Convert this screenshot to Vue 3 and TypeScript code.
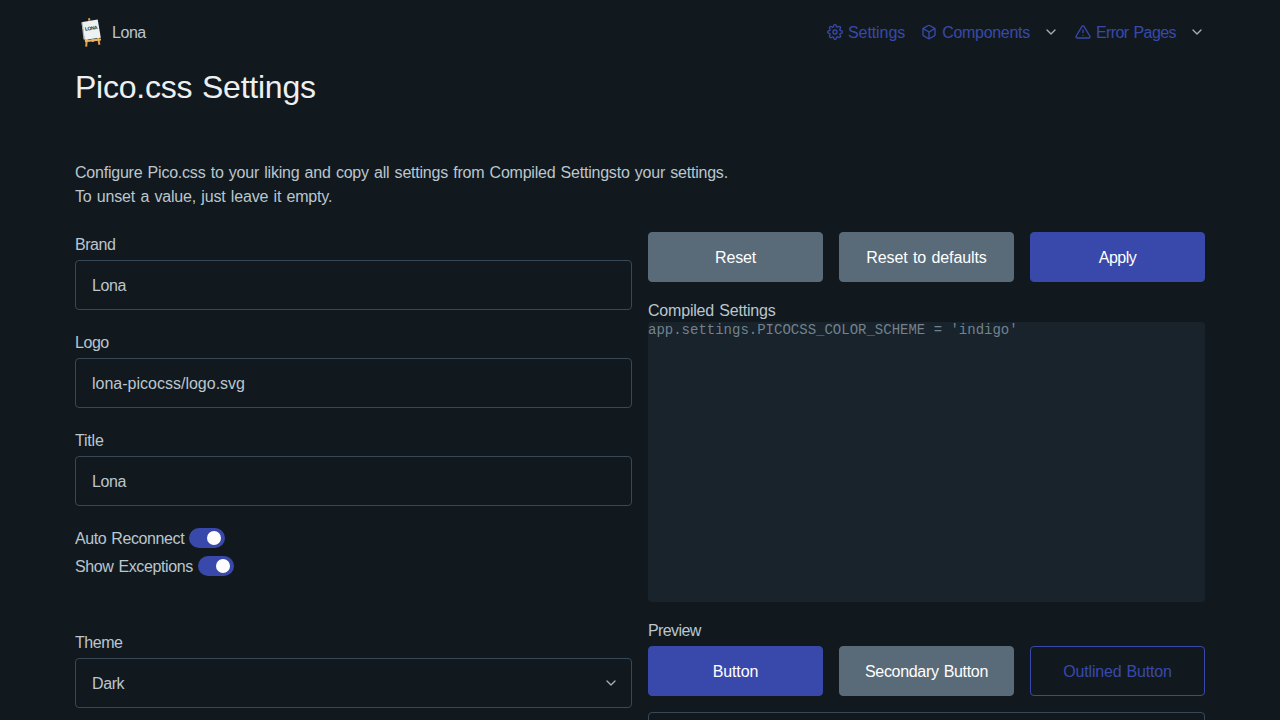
<script setup lang="ts">
import { ref } from 'vue'

interface TextField {
  id: string
  label: string
  value: string
}

interface Toggle {
  id: string
  label: string
  on: boolean
}

const fields = ref<TextField[]>([
  { id: 'brand', label: 'Brand', value: 'Lona' },
  { id: 'logo', label: 'Logo', value: 'lona-picocss/logo.svg' },
  { id: 'title', label: 'Title', value: 'Lona' },
])

const toggles = ref<Toggle[]>([
  { id: 'reconnect', label: 'Auto Reconnect', on: true },
  { id: 'exceptions', label: 'Show Exceptions', on: true },
])

const compiled = ref("app.settings.PICOCSS_COLOR_SCHEME = 'indigo'")
</script>

<template>
  <div class="page">
    <nav class="nav">
      <a class="brand">
        <svg class="logo" viewBox="0 0 22 30" width="22" height="30">
          <path d="M2.4 5.4 L3.4 12 M6.8 22 L6.2 29.6 M18 20 L19.4 27.8 M12.8 22 V25" stroke="#e0a550" stroke-width="2" fill="none" />
          <path d="M4.8 23 L21 21.4 V23.4 L5 25.2Z" fill="#edb45f" />
          <path d="M1.6 5.6 L3 4.8 L4.8 22.8 L3.4 22.2Z" fill="#a9b0b3" />
          <path d="M2.6 5 L17.7 2.4 L20.8 20.8 L4.6 22.8Z" fill="#eef1f2" />
          <path d="M8 1.4 L10 1 L10.4 3.4 L8.4 3.8Z" fill="#d9a04e" />
          <text x="5" y="12.9" textLength="12.6" transform="rotate(-9 11 11)" class="logo-text">LONA</text>
        </svg>
        <span class="brand-name">Lona</span>
      </a>
      <div class="links">
        <a class="link">
          <svg class="icon" viewBox="0 0 24 24">
            <circle cx="12" cy="12" r="3" />
            <path d="M19.4 15a1.65 1.65 0 0 0 .33 1.82l.06.06a2 2 0 0 1 0 2.83 2 2 0 0 1-2.83 0l-.06-.06a1.65 1.65 0 0 0-1.82-.33 1.65 1.65 0 0 0-1 1.51V21a2 2 0 0 1-2 2 2 2 0 0 1-2-2v-.09A1.65 1.65 0 0 0 9 19.4a1.65 1.65 0 0 0-1.82.33l-.06.06a2 2 0 0 1-2.83 0 2 2 0 0 1 0-2.83l.06-.06a1.65 1.65 0 0 0 .33-1.82 1.65 1.65 0 0 0-1.51-1H3a2 2 0 0 1-2-2 2 2 0 0 1 2-2h.09A1.65 1.65 0 0 0 4.6 9a1.65 1.65 0 0 0-.33-1.82l-.06-.06a2 2 0 0 1 0-2.83 2 2 0 0 1 2.83 0l.06.06a1.65 1.65 0 0 0 1.82.33H9a1.65 1.65 0 0 0 1-1.51V3a2 2 0 0 1 2-2 2 2 0 0 1 2 2v.09a1.65 1.65 0 0 0 1 1.51 1.65 1.65 0 0 0 1.82-.33l.06-.06a2 2 0 0 1 2.83 0 2 2 0 0 1 0 2.83l-.06.06a1.65 1.65 0 0 0-.33 1.82V9a1.65 1.65 0 0 0 1.51 1H21a2 2 0 0 1 2 2 2 2 0 0 1-2 2h-.09a1.65 1.65 0 0 0-1.51 1z" />
          </svg>
          <span class="settings-text">Settings</span>
        </a>
        <a class="link">
          <svg class="icon" viewBox="0 0 24 24">
            <path d="M21 16V8a2 2 0 0 0-1-1.73l-7-4a2 2 0 0 0-2 0l-7 4A2 2 0 0 0 3 8v8a2 2 0 0 0 1 1.73l7 4a2 2 0 0 0 2 0l7-4A2 2 0 0 0 21 16z" />
            <polyline points="3.27 6.96 12 12.01 20.73 6.96" />
            <line x1="12" y1="22.08" x2="12" y2="12" />
          </svg>
          <span class="components-text">Components</span>
          <svg class="chevron" viewBox="0 0 24 24"><polyline points="6 9 12 15 18 9" /></svg>
        </a>
        <a class="link">
          <svg class="icon" viewBox="0 0 24 24">
            <path d="M10.29 3.86L1.82 18a2 2 0 0 0 1.71 3h16.94a2 2 0 0 0 1.71-3L13.71 3.86a2 2 0 0 0-3.42 0z" />
            <line x1="12" y1="9" x2="12" y2="13" />
            <line x1="12" y1="17" x2="12.01" y2="17" />
          </svg>
          <span class="errors-text">Error Pages</span>
          <svg class="chevron" viewBox="0 0 24 24"><polyline points="6 9 12 15 18 9" /></svg>
        </a>
      </div>
    </nav>

    <h1>Pico.css Settings</h1>
    <p class="intro">
      Configure Pico.css to your liking and copy all settings from Compiled Settingsto your settings.<br />
      <span class="hint">To unset a value, just leave it empty.</span>
    </p>

    <div class="columns">
      <section>
        <div v-for="field in fields" :key="field.id" class="field" :class="`field-${field.id}`">
          <label :for="field.id">{{ field.label }}</label>
          <input :id="field.id" v-model="field.value" class="control" type="text" />
        </div>
        <div class="toggles">
          <label v-for="toggle in toggles" :key="toggle.id" class="toggle">
            <span class="toggle-text">{{ toggle.label }}</span>
            <input v-model="toggle.on" class="switch" type="checkbox" role="switch" />
          </label>
        </div>
        <div class="field">
          <label>Theme</label>
          <div class="control select">
            <span>Dark</span>
            <svg class="chevron" viewBox="0 0 24 24"><polyline points="6 9 12 15 18 9" /></svg>
          </div>
        </div>
      </section>

      <section>
        <div class="buttons">
          <button class="secondary">Reset</button>
          <button class="secondary wide">Reset to defaults</button>
          <button class="primary narrow">Apply</button>
        </div>
        <div class="output-label">Compiled Settings</div>
        <pre class="output">{{ compiled }}</pre>
        <div class="preview-label">Preview</div>
        <div class="buttons">
          <button class="primary wide">Button</button>
          <button class="secondary snug">Secondary Button</button>
          <button class="outline">Outlined Button</button>
        </div>
        <input class="control" type="text" />
      </section>
    </div>
  </div>
</template>

<style>
html,
body {
  background: #11191f;
  overflow: hidden;
}
</style>

<style scoped>
.page {
  box-sizing: border-box;
  width: 1130px;
  height: 720px;
  margin: 0 auto;
  overflow: hidden;
  color: #bbc6ce;
  font: 400 16px/24px "Liberation Sans", Arial, sans-serif;
  letter-spacing: -0.2px;
  word-spacing: 1px;
}
.page *,
.page *::before {
  box-sizing: border-box;
}
.nav {
  display: flex;
  justify-content: space-between;
  align-items: center;
  height: 64px;
}
.brand {
  display: flex;
  align-items: center;
  gap: 10px;
  padding-left: 5px;
}
.brand-name {
  padding-top: 1px;
  letter-spacing: -0.45px;
}
.logo-text {
  font: 700 5px "Liberation Sans", sans-serif;
  letter-spacing: 0;
  fill: #222b30;
}
.links {
  display: flex;
  gap: 16px;
}
.link {
  display: flex;
  align-items: center;
  color: #3949ab;
}
.link span {
  padding-top: 1px;
}
.settings-text {
  letter-spacing: -0.08px;
}
.components-text {
  letter-spacing: -0.3px;
}
.errors-text {
  letter-spacing: -0.57px;
}
.icon {
  width: 16px;
  height: 16px;
  margin-right: 5px;
  fill: none;
  stroke: currentColor;
  stroke-width: 2;
  stroke-linecap: round;
  stroke-linejoin: round;
}
.chevron {
  width: 16px;
  height: 16px;
  margin-left: 13px;
  fill: none;
  stroke: #a2afb9;
  stroke-width: 2;
  stroke-linecap: round;
  stroke-linejoin: round;
}
h1 {
  margin: 0;
  padding-top: 3px;
  height: 96px;
  color: #edf0f3;
  font-size: 32px;
  font-weight: 400;
  line-height: 40px;
  letter-spacing: -0.23px;
}
.intro {
  margin: 0 0 23px;
  padding-top: 1px;
  letter-spacing: -0.22px;
}
.hint {
  letter-spacing: -0.17px;
}
.columns {
  display: grid;
  grid-template-columns: 1fr 1fr;
  gap: 16px;
}
.field {
  margin-bottom: 20px;
}
.field label {
  display: block;
  height: 24px;
  margin-bottom: 4px;
  line-height: 26px;
  letter-spacing: -0.45px;
}
.control {
  display: block;
  width: 100%;
  height: 50px;
  margin: 0;
  padding: 2px 16px 0;
  color: #bbc6ce;
  background: #11191f;
  border: 1px solid #374956;
  border-radius: 4px;
  outline: none;
  font: inherit;
  letter-spacing: -0.4px;
}
.field-logo .control {
  letter-spacing: 0;
}
.field-title label {
  letter-spacing: -0.2px;
}
.select {
  display: flex;
  align-items: center;
  justify-content: space-between;
  padding: 0 12px 0 16px;
}
.select span {
  padding-top: 2px;
}
.toggles {
  padding-top: 2px;
  margin-top: -4px;
  height: 108px;
}
.toggle {
  display: flex;
  align-items: center;
  gap: 5px;
  height: 28px;
}
.toggle-text {
  padding-top: 2px;
  letter-spacing: -0.4px;
}
.switch {
  appearance: none;
  display: block;
  width: 36px;
  height: 20px;
  margin: 0;
  padding: 3px;
  background: #596b78;
  border-radius: 10px;
}
.switch::before {
  content: "";
  display: block;
  width: 14px;
  height: 14px;
  border-radius: 50%;
  background: #fff;
}
.switch:checked {
  background: #3949ab;
}
.switch:checked::before {
  margin-left: 15px;
}
.buttons {
  display: grid;
  grid-template-columns: repeat(3, 1fr);
  gap: 16px;
  margin-bottom: 16px;
}
button {
  height: 50px;
  padding: 2px 0 0;
  border: 1px solid transparent;
  border-radius: 4px;
  color: #fff;
  font: inherit;
  letter-spacing: inherit;
  word-spacing: inherit;
}
.wide {
  letter-spacing: -0.1px;
}
.snug {
  letter-spacing: -0.33px;
}
.narrow {
  letter-spacing: -0.5px;
}
.primary {
  background: #3949ab;
  border-color: #3949ab;
}
.secondary {
  background: #596b78;
  border-color: #596b78;
}
.outline {
  background: transparent;
  border-color: #3949ab;
  color: #3949ab;
}
.output-label {
  height: 24px;
  line-height: 26px;
}
.output {
  height: 280px;
  margin: 0 0 16px;
  color: #73828c;
  background: #18232c;
  border-radius: 4px;
  font: 14px/16px "Liberation Mono", monospace;
  letter-spacing: 0;
  word-spacing: 0;
}
.preview-label {
  height: 24px;
  margin-bottom: 4px;
  line-height: 26px;
  letter-spacing: -0.6px;
}
</style>
